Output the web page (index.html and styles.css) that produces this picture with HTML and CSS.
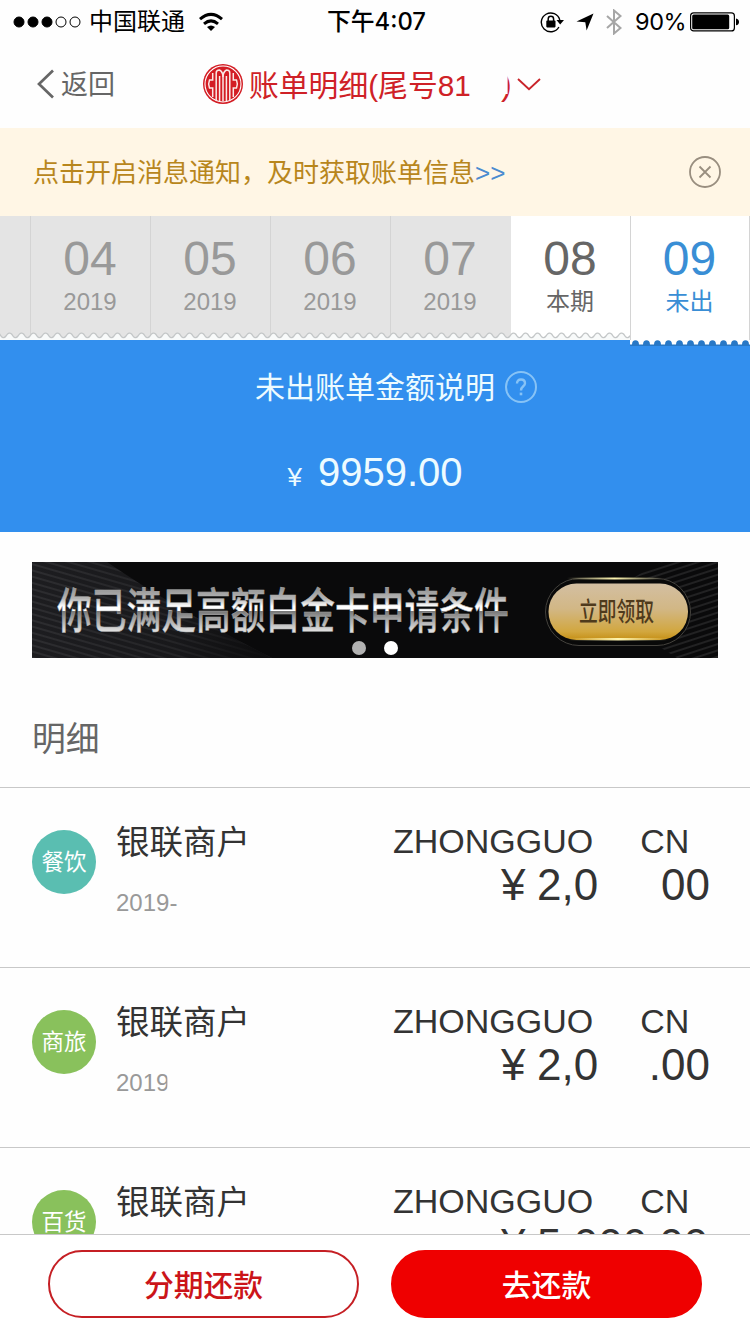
FILE: index.html
```html
<!DOCTYPE html>
<html lang="zh-CN">
<head>
<meta charset="utf-8">
<title>账单明细</title>
<link rel="stylesheet" href="styles.css">
</head>
<body>
<div class="screen">
  <header class="status">
    <div class="status-left">
      <svg class="signal" width="68" height="12" viewBox="0 0 68 12"><g stroke="#000" stroke-width="1"><circle cx="6" cy="6" r="5"/><circle cx="20" cy="6" r="5"/><circle cx="34" cy="6" r="5"/><circle cx="48" cy="6" r="5" fill="none"/><circle cx="62" cy="6" r="5" fill="none"/></g></svg>
      <span class="carrier">中国联通</span>
      <svg class="wifi" width="26" height="20" viewBox="0 0 26 20"><g fill="none" stroke="#000" stroke-width="3"><path d="M2 7.2Q13-2.5 24 7.2"/><path d="M6 11.8Q13 6 20 11.8"/></g><path d="M9 15Q13 11.8 17 15L13 19Z"/></svg>
    </div>
    <div class="clock">下午4:07</div>
    <div class="status-right">
      <svg width="25" height="22" viewBox="0 0 25 22"><path d="M18.9 16A9.4 9.4 0 1 1 19.8 9" fill="none" stroke="#000" stroke-width="1.4"/><path d="M16.500 9H24L20.2 13.5Z"/><rect x="6.3" y="9.6" width="9.2" height="6.8" rx=".8"/><path d="M8.2 10V8a2.7 2.7 0 0 1 5.4 0V10" fill="none" stroke="#000" stroke-width="1.5"/></svg>
      <svg class="locate" width="18" height="18" viewBox="0 0 18 18"><path d="M17.5.5L10.6 17.5L9.3 9.2L.5 8.5Z"/></svg>
      <svg class="bluetooth" width="16" height="26" viewBox="0 0 16 26"><path d="M1 7L14.5 19L8 24.5V1.5L14.5 7L1 19" fill="none" stroke="#a6a6a6" stroke-width="2"/></svg>
      <span class="percent">90%</span>
      <svg class="battery" width="49" height="20" viewBox="0 0 49 20"><rect x=".6" y=".9" width="43.8" height="18" rx="3" fill="none" stroke="#000" stroke-width="1.2"/><rect x="2.2" y="2.5" width="37" height="14.8" rx="1.5"/><path d="M46 6.500q3 .6 3 3.4t-3 3.4Z"/></svg>
    </div>
  </header>

  <nav class="nav">
    <svg class="back" width="19" height="30" viewBox="0 0 19 30"><path d="M17 1.5L3 15L17 28.5" fill="none" stroke="#666" stroke-width="2.7"/></svg>
    <span class="back-label">返回</span>
    <svg class="logo" width="40" height="40" viewBox="0 0 40 40"><circle cx="20" cy="20" r="20" fill="#d31d24"/><circle cx="20" cy="20" r="18" fill="none" stroke="#fff" stroke-width="1.1"/><g fill="none" stroke="#fbe9e6" stroke-width="1.500"><path d="M13.200 36V9Q13.200 6 16.500 6Q20 8 20 13V37.500"/><path d="M26.800 36V9Q26.800 6 23.500 6Q20 8 20 13"/><path d="M16.600 37.500V12"/><path d="M23.400 37.500V12"/><path d="M9.700 9V16H6.500Q4.800 20 6.500 24H9.700V33"/><path d="M30.300 9V16H33.500Q35.200 20 33.500 24H30.300V33"/></g></svg>
    <h1 class="title">账单明细(尾号81</h1>
    <span class="title-end">)</span>
    <svg class="caret" width="24" height="13" viewBox="0 0 24 13"><path d="M1 1L12 11.2L23 1" fill="none" stroke="#c9242a" stroke-width="1.9"/></svg>
  </nav>

  <section class="notice">
    <span>点击开启消息通知，及时获取账单信息<b class="more">&gt;&gt;</b></span>
    <svg width="32" height="32" viewBox="0 0 32 32" fill="none" stroke="#998e7f" stroke-width="1.8"><circle cx="16" cy="16" r="15"/><path d="M10.500 10.500L21.500 21.500M21.500 10.500L10.500 21.500"/></svg>
  </section>

  <section class="months">
    <div class="month stub"></div>
    <div class="month"><strong>04</strong><span>2019</span></div>
    <div class="month"><strong>05</strong><span>2019</span></div>
    <div class="month"><strong>06</strong><span>2019</span></div>
    <div class="month last"><strong>07</strong><span>2019</span></div>
    <div class="month current"><strong>08</strong><span>本期</span></div>
    <div class="month active"><strong>09</strong><span>未出</span></div>
    <svg class="edge" width="750" height="15" viewBox="0 0 750 15">
      <defs>
        <pattern id="scallop" width="12" height="9" patternUnits="userSpaceOnUse"><path d="M0 9V3.500Q3 9 6 5Q9 0 12 3.500V9Z" fill="#f8fafa"/><path d="M-1 2.500L0 3.500Q3 9 6 5Q9 0 12 3.500L13 5" fill="none" stroke="#c3c6c7" stroke-width="1.300"/></pattern>
        <pattern id="bite" width="11" height="6" patternUnits="userSpaceOnUse"><path d="M0 6V4.500H2Q2.200.3 5.500.3T9 4.500H11V6Z" fill="#2878c6"/></pattern>
      </defs>
      <rect width="630" height="9" fill="url(#scallop)"/>
      <rect x="631" y="0" width="118" height="9" fill="#fff"/>
      <rect x="630" y="9" width="120" height="6" fill="#fff"/>
      <g transform="translate(630 9)"><rect width="120" height="6" fill="url(#bite)"/></g>
    </svg>
  </section>

  <section class="summary">
    <div class="summary-title"><span>未出账单金额说明</span>
      <svg width="32" height="32" viewBox="0 0 32 32" fill="none" stroke="#87c3f6" stroke-width="2"><circle cx="16" cy="16" r="15"/><path d="M12 12.500Q12 8.500 16 8.500T20 12.300C20 15.500 16 15 16 19.500" stroke-width="2.400"/><path d="M16 21.600V24.300" stroke-width="2.600"/></svg>
    </div>
    <div class="total"><span class="yen">¥</span>9959.00</div>
  </section>

  <section class="banner">
    <svg width="686" height="96" viewBox="0 0 686 96">
      <defs>
        <linearGradient id="silver" gradientUnits="userSpaceOnUse" x1="0" y1="-41" x2="0" y2="5"><stop offset="0" stop-color="#8f8f8f"/><stop offset=".25" stop-color="#b5b5b5"/><stop offset=".42" stop-color="#fff"/><stop offset=".52" stop-color="#fff"/><stop offset=".53" stop-color="#777"/><stop offset=".7" stop-color="#a5a5a5"/><stop offset=".95" stop-color="#dedede"/></linearGradient>
        <linearGradient id="gold" x1="0" y1="0" x2="0" y2="1"><stop offset="0" stop-color="#d3bfa2"/><stop offset=".45" stop-color="#d2b785"/><stop offset=".85" stop-color="#d2a73f"/><stop offset="1" stop-color="#c58f15"/></linearGradient>
        <linearGradient id="glint"><stop offset="0" stop-color="#fff6b0" stop-opacity="0"/><stop offset=".5" stop-color="#fff6b0"/><stop offset="1" stop-color="#fff6b0" stop-opacity="0"/></linearGradient>
        <pattern id="waves" width="120" height="6" patternUnits="userSpaceOnUse" patternTransform="rotate(16)"><rect width="120" height="6" fill="#1d1d20"/><path d="M0 2H120" stroke="#323235" stroke-width="1.500"/></pattern>
        <pattern id="rays" width="120" height="6" patternUnits="userSpaceOnUse" patternTransform="rotate(-18)"><path d="M0 2H120" stroke="#29292a" stroke-width="1.300"/></pattern>
        <linearGradient id="shade"><stop offset="0" stop-color="#0a0a0b" stop-opacity="0"/><stop offset=".6" stop-color="#0a0a0b" stop-opacity=".25"/><stop offset="1" stop-color="#0a0a0b" stop-opacity=".9"/></linearGradient>
      </defs>
      <rect width="686" height="96" fill="#0a0a0b"/>
      <path d="M0 0H75Q145 48 240 96H0Z" fill="url(#waves)"/>
      <path d="M0 0H75Q145 48 240 96H0Z" fill="url(#shade)"/>
      <path d="M686 0H630Q590 18 570 48Q620 80 645 96H686Z" fill="url(#rays)"/>
      <text class="banner-text" transform="translate(25 66) scale(.724 1)" fill="url(#silver)">你已满足高额白金卡申请条件</text>
      <rect x="513.500" y="16.500" width="145" height="67" rx="33.500" fill="#090909" stroke="#44423d"/>
      <rect x="516.500" y="21.500" width="139.500" height="56.500" rx="28" fill="url(#gold)"/>
      <rect x="535" y="15.500" width="95" height="2" fill="url(#glint)"/>
      <rect x="536" y="76" width="100" height="2.500" fill="url(#glint)"/>
      <text class="banner-cta" transform="translate(547 58.500) scale(.72 1)" fill="#4f3a1c">立即领取</text>
      <circle cx="327" cy="86" r="7" fill="#b2b2b2"/><circle cx="359" cy="86" r="7" fill="#fff"/>
    </svg>
  </section>

  <h2 class="section-title">明细</h2>

  <main class="list">
    <article class="row">
      <div class="badge teal">餐饮</div>
      <div class="merchant"><div class="name">银联商户</div><div class="date">2019-</div></div>
      <div class="detail"><div class="place"><span>ZHONGGUO</span><span>CN</span></div><div class="amount"><span class="cur">¥</span><span>2,0</span><span class="cents">00</span></div></div>
    </article>
    <article class="row">
      <div class="badge">商旅</div>
      <div class="merchant"><div class="name">银联商户</div><div class="date"><span class="cut">2019</span></div></div>
      <div class="detail"><div class="place"><span>ZHONGGUO</span><span>CN</span></div><div class="amount"><span class="cur">¥</span><span>2,0</span><span class="cents">.00</span></div></div>
    </article>
    <article class="row">
      <div class="badge">百货</div>
      <div class="merchant"><div class="name">银联商户</div></div>
      <div class="detail"><div class="place"><span>ZHONGGUO</span><span>CN</span></div><div class="amount"><span class="cur">¥</span><span>5,000.00</span></div></div>
    </article>
  </main>

  <footer class="actions">
    <button class="btn outline">分期还款</button>
    <button class="btn solid">去还款</button>
  </footer>
</div>
</body>
</html>
```
FILE: styles.css
```css
* { box-sizing: border-box; margin: 0; padding: 0; }
body { width: 750px; height: 1334px; overflow: hidden; background: #fefefe; font-family: "Liberation Sans", "Noto Sans CJK SC", sans-serif; }
svg { display: block; flex: none; }
.screen { display: flex; flex-direction: column; width: 750px; height: 1334px; overflow: hidden; }

.status { display: grid; grid-template-columns: 327px 100px 323px; flex: none; height: 40px; align-items: center; font-family: Inter, "Noto Sans CJK SC", sans-serif; color: #000; font-size: 24px; line-height: 42px; white-space: nowrap; }
.status-left, .status-right { display: flex; align-items: center; height: 40px; }
.status-left { padding-left: 13px; }
.carrier { margin-left: 8px; padding-top: 1px; }
.wifi { margin-left: 13px; }
.clock { font-weight: 500; font-size: 23.800px; padding-top: 1px; }
.status-right { padding-left: 113px; }
.locate { margin-left: 11px; }
.bluetooth { margin-left: 12px; }
.percent { margin-left: 13px; width: 55px; padding-top: 1px; font-size: 23.500px; letter-spacing: -.4px; }

.nav { display: flex; flex: none; align-items: center; height: 88px; padding-left: 36px; white-space: nowrap; }
.back-label { width: 55px; margin-left: 6px; padding-top: 2px; color: #666; font-size: 27px; line-height: 40px; }
.logo { margin-left: 87px; }
.title { width: 222px; margin-left: 6px; padding-top: 3px; color: #cf2127; font-size: 29.800px; font-weight: 400; line-height: 40px; }
.title-end { width: 12px; margin-left: 30px; color: #cf2127; font-size: 32px; line-height: 40px; clip-path: polygon(55% 20%, 100% 20%, 100% 100%, 0 100%, 0 75%, 55% 75%); }
.caret { margin-left: 4px; }

.notice { display: flex; flex: none; align-items: center; justify-content: space-between; height: 88px; padding: 2px 29px 0 33px; background: #fff6e5; color: #b8861c; font-size: 26px; line-height: 40px; }
.notice svg { margin-bottom: 2px; }
.more { color: #4b8bd0; font-weight: 400; }

.months { position: relative; display: flex; flex: none; height: 124px; background: #e4e4e4; }
.month { display: flex; flex: none; flex-direction: column; align-items: center; width: 120px; height: 124px; padding: 15px 1px 0 0; border-right: 1px solid #d4d4d4; color: #999; }
.month strong { font-size: 48px; font-weight: 400; line-height: 56px; }
.month span { margin-top: 1px; font-size: 24px; line-height: 28px; }
.month.stub { width: 31px; }
.month.last { border-right-color: #e4e4e4; }
.month.current { background: #fff; color: #666; }
.month.active { width: 119px; background: #fff; color: #398ed5; }
.edge { position: absolute; left: 0; top: 115px; z-index: 1; }

.summary { flex: none; height: 192px; padding-top: 30px; background: #328fee; color: #edfbff; }
.summary-title { display: flex; align-items: center; gap: 10px; height: 34px; padding-left: 255px; font-size: 30px; line-height: 34px; }
.summary-title span { padding-top: 2px; }
.total { display: flex; align-items: baseline; justify-content: center; padding-top: 45px; font-size: 40px; line-height: 46px; }
.yen { margin-right: 16px; font-size: 26px; }

.banner { flex: none; padding: 30px 32px 0; }
.banner-text { font: 500 48px "Noto Sans CJK SC", sans-serif; stroke: #aaa; stroke-width: .5px; }
.banner-cta { font: 500 26px "Noto Sans CJK SC", sans-serif; }

.section-title { flex: none; height: 129px; padding: 61px 32px 0; color: #666; font-size: 33.800px; font-weight: 400; line-height: 40px; }

.list { flex: none; height: 447px; overflow: hidden; }
.row { display: flex; height: 180px; border-top: 1px solid #c8c8c8; padding-left: 32px; color: #333; }
.badge { flex: none; width: 64px; height: 64px; margin-top: 42px; border-radius: 50%; background: #89c15c; color: #fff; font-size: 22.500px; line-height: 65px; text-align: center; white-space: nowrap; }
.badge.teal { background: #5abeb1; }
.merchant { flex: none; width: 296px; padding: 35px 0 0 20px; }
.name { font-size: 33.500px; line-height: 40px; }
.date { margin-top: 26px; color: #999; font-size: 24px; line-height: 28px; }
.cut { display: inline-block; clip-path: inset(0 2px 0 0); }
.detail { flex: none; width: 320px; padding-top: 34px; }
.place { display: flex; gap: 47px; padding-left: 1px; font-size: 34px; line-height: 38px; }
.amount { display: flex; padding-left: 109px; font-size: 44px; line-height: 49px; }
.cur { width: 36px; }
.cents { margin-left: auto; padding-right: 2px; }

.actions { display: flex; flex: none; gap: 32px; height: 100px; padding: 15px 48px 0; border-top: 1px solid #c8c8c8; background: #fff; }
.btn { width: 311px; height: 68px; border: 2px solid #c51f24; border-radius: 34px; background: #fff; color: #cb1419; padding-bottom: 3px; font: 500 29.800px/60px "Noto Sans CJK SC", sans-serif; }
.btn.solid { border-color: #ef0000; background: #ef0000; color: #fff; }
```
